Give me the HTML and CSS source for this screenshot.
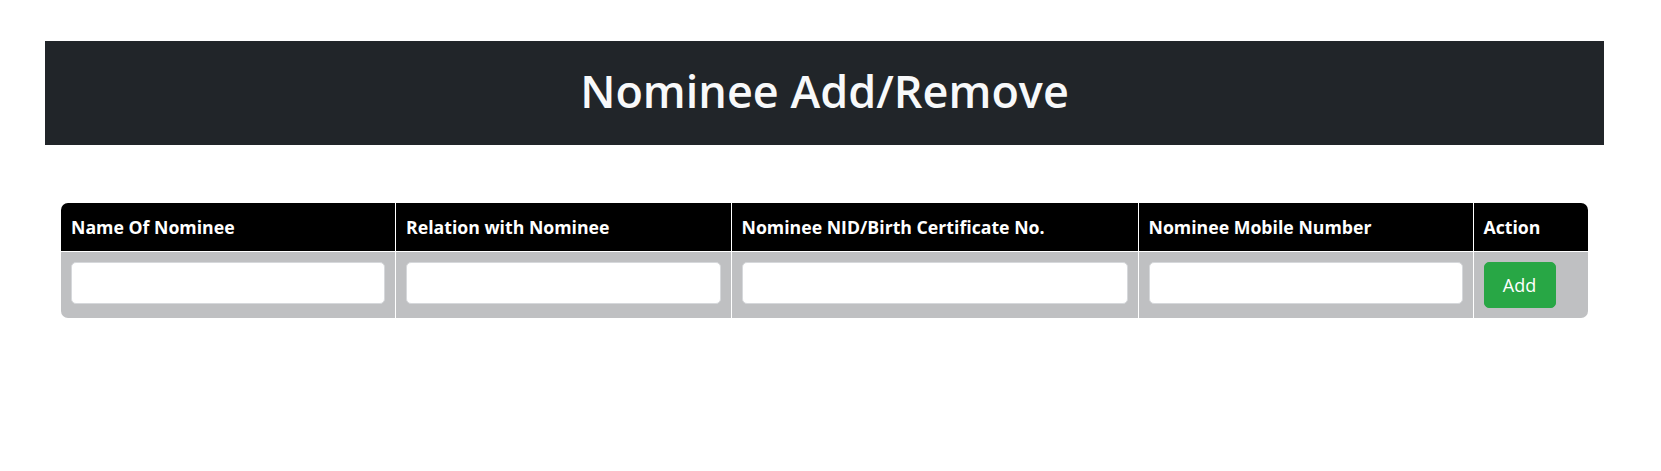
FILE: index.html
```html
<!DOCTYPE html>
<html lang="en">
<head>
<meta charset="utf-8">
<title>Nominee Add/Remove</title>
<link rel="stylesheet" href="styles.css">
</head>
<body>
<div class="page">
  <header class="banner">
    <h1 class="banner-title">Nominee Add/Remove</h1>
  </header>
  <div class="table-wrap">
    <table class="nominee-table">
      <colgroup>
        <col class="col-name">
        <col class="col-relation">
        <col class="col-nid">
        <col class="col-mobile">
        <col class="col-action">
      </colgroup>
      <thead>
        <tr>
          <th>Name Of Nominee</th>
          <th>Relation with Nominee</th>
          <th>Nominee NID/Birth Certificate No.</th>
          <th>Nominee Mobile Number</th>
          <th>Action</th>
        </tr>
      </thead>
      <tbody>
        <tr>
          <td><input class="field" type="text"></td>
          <td><input class="field" type="text"></td>
          <td><input class="field" type="text"></td>
          <td><input class="field" type="text"></td>
          <td><button class="btn-add" type="button">Add</button></td>
        </tr>
      </tbody>
    </table>
  </div>
</div>
</body>
</html>
```

FILE: styles.css
```css
* {
  box-sizing: border-box;
}

html, body {
  margin: 0;
  padding: 0;
  background: #ffffff;
}

body {
  font-family: "Open Sans", "Noto Sans", "DejaVu Sans", sans-serif;
  color: #212529;
}

.page {
  padding-top: 41px;
}

.banner {
  margin: 0 57px 0 45px;
  height: 104px;
  background: #212529;
  display: flex;
  align-items: center;
  justify-content: center;
}

.banner-title {
  margin: 0;
  color: #f8f9fa;
  font-size: 45px;
  font-weight: 600;
  line-height: 1;
  padding-bottom: 6px;
}

.table-wrap {
  margin: 58px 0 0 61px;
  width: 1527px;
}

.nominee-table {
  width: 100%;
  table-layout: fixed;
  border-collapse: separate;
  border-spacing: 0;
  border-radius: 7px;
  overflow: hidden;
}

.col-name { width: 335px; }
.col-relation { width: 335.5px; }
.col-nid { width: 407px; }
.col-mobile { width: 335px; }
.col-action { width: auto; }

.nominee-table th {
  background: #000000;
  color: #ffffff;
  font-weight: 700;
  font-size: 17.7px;
  text-align: left;
  height: 49px;
  padding: 0 10px 1px;
  border-right: 1px solid #ffffff;
  border-bottom: 1px solid #ffffff;
  vertical-align: middle;
}

.nominee-table td {
  background: #bfc0c2;
  padding: 10px;
  border-right: 1px solid #ffffff;
  vertical-align: top;
  height: 66px;
}

.nominee-table th:last-child,
.nominee-table td:last-child {
  border-right: none;
}

.field {
  display: block;
  width: 100%;
  height: 42px;
  border: 1px solid #d6d8db;
  border-radius: 5px;
  background: #ffffff;
  font-family: inherit;
  font-size: 16px;
  padding: 6px 12px;
}

.btn-add {
  display: block;
  width: 72px;
  height: 46px;
  background: #28a745;
  border: 1px solid #28a745;
  border-radius: 5px;
  color: #ffffff;
  font-family: inherit;
  font-size: 18px;
  padding: 0;
}
```
